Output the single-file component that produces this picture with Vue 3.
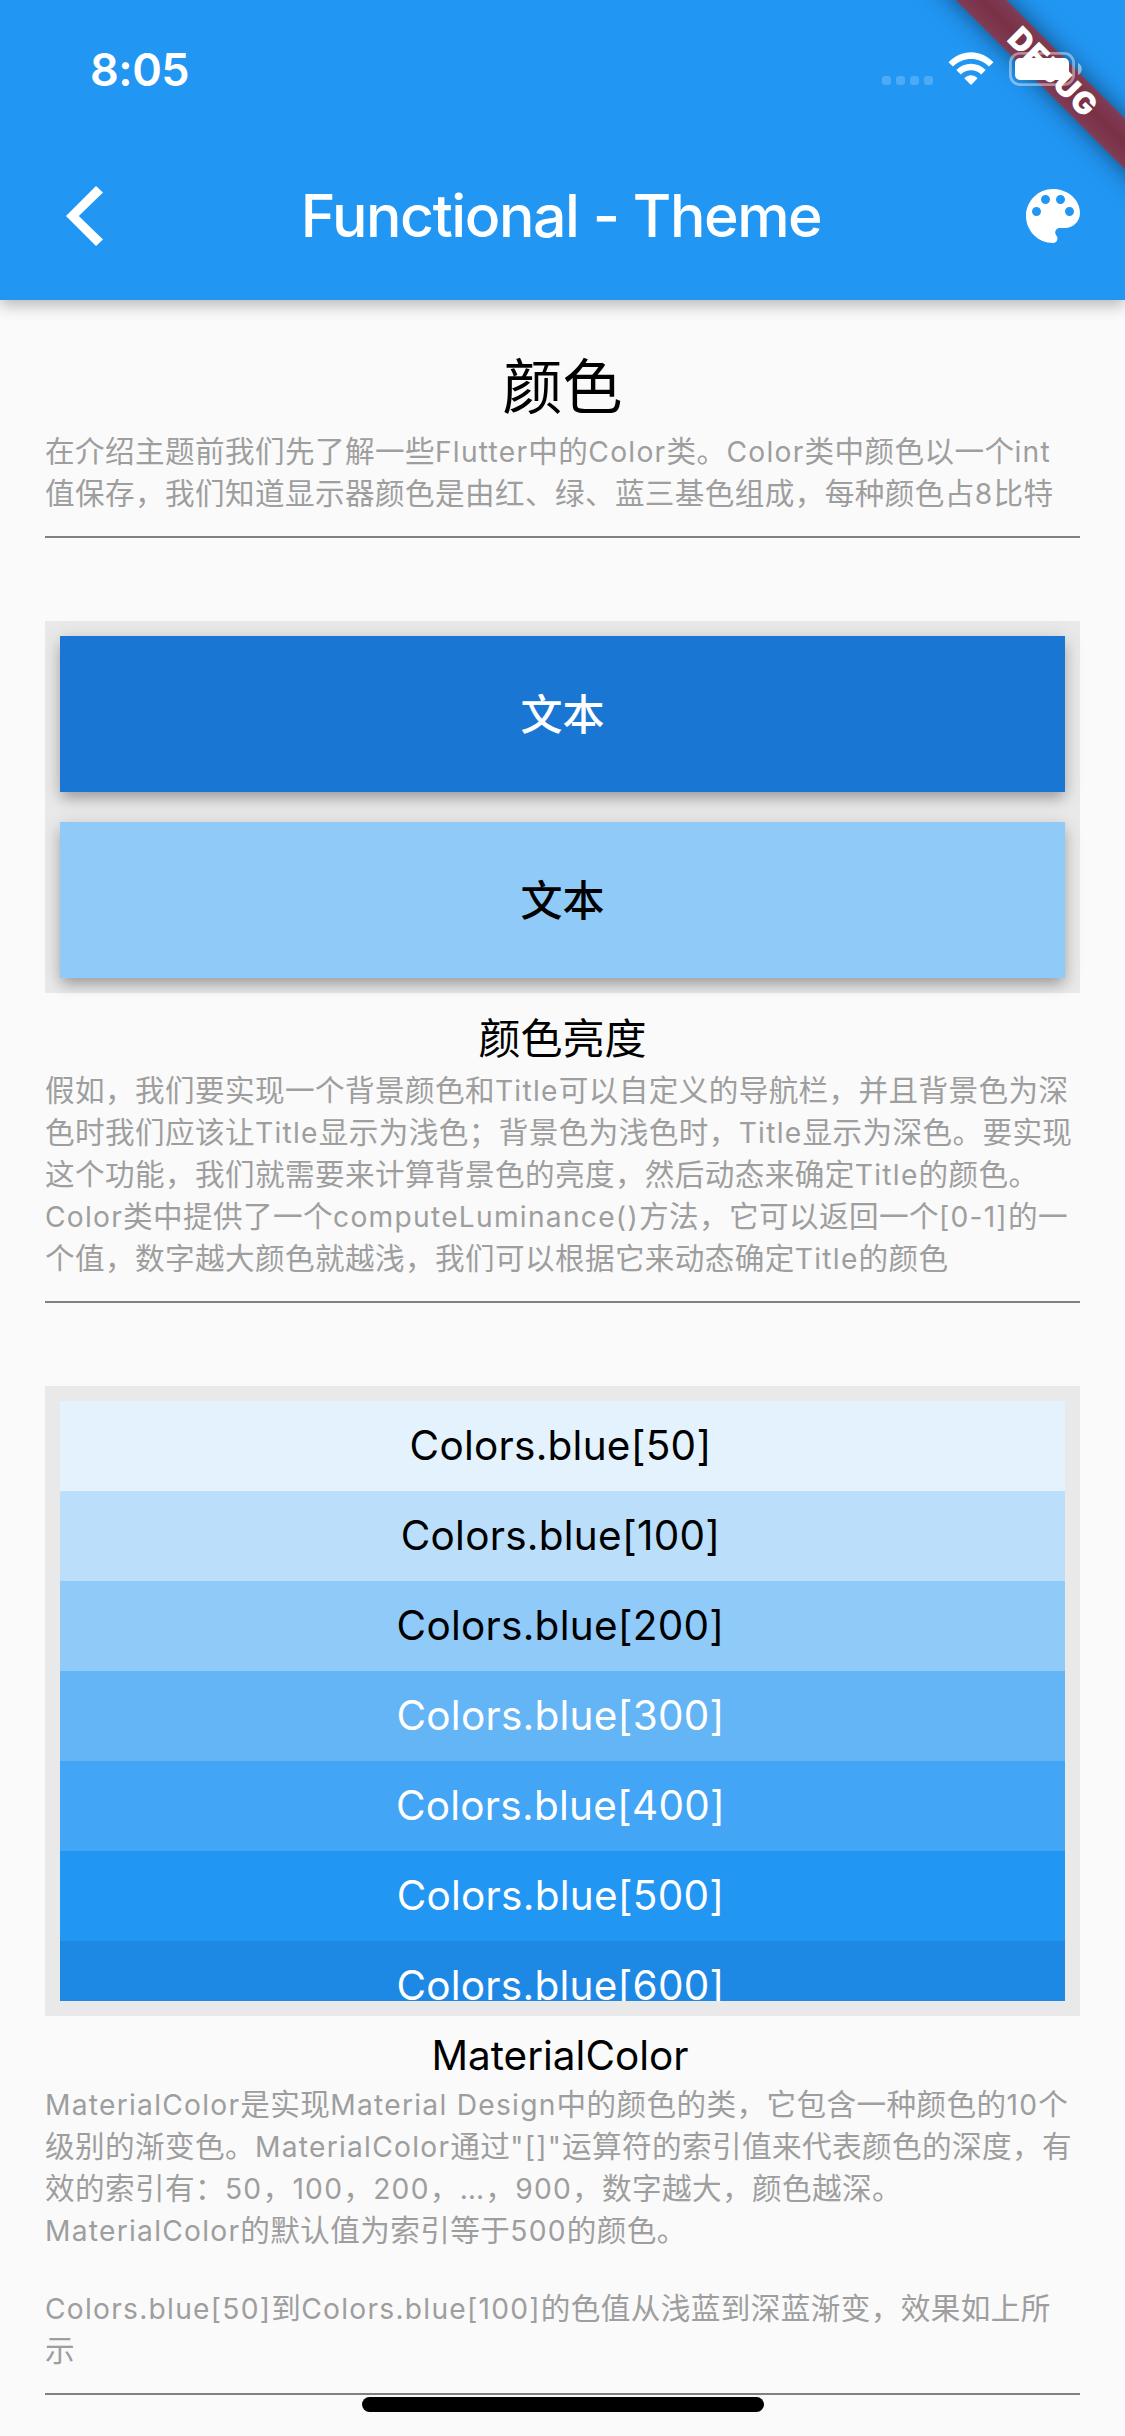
<script setup>
// Splits a line into CJK and Latin runs so each script gets its own size and tracking.
const runs = (line) =>
  line.split(/([\x20-\x7e…]+)/).filter(Boolean).map((text) => ({ text, latin: /^[\x20-\x7e…]/.test(text) }))

const intro = [
  '在介绍主题前我们先了解一些Flutter中的Color类。Color类中颜色以一个int',
  '值保存，我们知道显示器颜色是由红、绿、蓝三基色组成，每种颜色占8比特',
].map(runs)

const luminance = [
  '假如，我们要实现一个背景颜色和Title可以自定义的导航栏，并且背景色为深',
  '色时我们应该让Title显示为浅色；背景色为浅色时，Title显示为深色。要实现',
  '这个功能，我们就需要来计算背景色的亮度，然后动态来确定Title的颜色。',
  'Color类中提供了一个computeLuminance()方法，它可以返回一个[0-1]的一',
  '个值，数字越大颜色就越浅，我们可以根据它来动态确定Title的颜色',
].map(runs)

const material = [
  'MaterialColor是实现Material Design中的颜色的类，它包含一种颜色的10个',
  '级别的渐变色。MaterialColor通过"[]"运算符的索引值来代表颜色的深度，有',
  '效的索引有：50，100，200，…，900，数字越大，颜色越深。',
  'MaterialColor的默认值为索引等于500的颜色。',
].map(runs)

const gradient = [
  'Colors.blue[50]到Colors.blue[100]的色值从浅蓝到深蓝渐变，效果如上所',
  '示',
].map(runs)

const shades = [50, 100, 200, 300, 400, 500, 600]
</script>

<template>
  <div class="screen">
    <header class="app-bar">
      <div class="status">
        <span class="time">8:05</span>
        <div class="indicators">
          <div class="dots"><i v-for="n in 4" :key="n" class="dot"></i></div>
          <svg class="wifi" width="46" height="34" viewBox="0 0 46 34">
            <path d="M0.5 10.2C13 -3.2 33 -3.2 45.5 10.2L41 14.6C31 4.6 15 4.6 5 14.6Z" />
            <path d="M8.3 18C16.5 9.7 29.5 9.7 37.7 18L33.2 22.4C27.4 16.8 18.6 16.8 12.8 22.4Z" />
            <path d="M16.3 26.2C20.2 22.3 25.8 22.3 29.7 26.2L23 33Z" />
          </svg>
          <svg class="battery" width="74" height="34" viewBox="0 0 74 34">
            <rect x="1.4" y="1.4" width="63.2" height="31.2" rx="9.6" fill="none" stroke="#fff" stroke-opacity=".42" stroke-width="2.8" />
            <rect x="6" y="6" width="54" height="22" rx="5" fill="#fff" />
            <path d="M69 11C74 13 74 21 69 23Z" fill="#fff" fill-opacity=".5" />
          </svg>
        </div>
      </div>
      <div class="toolbar">
        <svg class="back" width="37" height="60" viewBox="0 0 37 60">
          <path d="M0 30L30 0L37 6.6L12.8 30L37 53.4L30 60Z" />
        </svg>
        <h1 class="title">Functional - Theme</h1>
        <svg class="palette" width="72" height="72" viewBox="0 0 24 24">
          <path d="M12 3c-4.97 0-9 4.03-9 9s4.03 9 9 9c.83 0 1.5-.67 1.5-1.5 0-.39-.15-.74-.39-1.01-.23-.26-.38-.61-.38-.99 0-.83.67-1.5 1.5-1.5H16c2.76 0 5-2.24 5-5 0-4.42-4.03-8-9-8zm-5.5 9c-.83 0-1.5-.67-1.5-1.5S5.67 9 6.5 9 8 9.67 8 10.5 7.33 12 6.5 12zm3-4C8.67 8 8 7.33 8 6.5S8.67 5 9.5 5s1.5.67 1.5 1.5S10.33 8 9.5 8zm5 0c-.83 0-1.5-.67-1.5-1.5S13.67 5 14.5 5s1.5.67 1.5 1.5S15.33 8 14.5 8zm3 4c-.83 0-1.5-.67-1.5-1.5S16.67 9 17.5 9s1.5.67 1.5 1.5-.67 1.5-1.5 1.5z" />
        </svg>
      </div>
      <div class="banner-clip"><div class="banner">DEBUG</div></div>
    </header>

    <main class="content">
      <section class="section">
        <h2 class="heading large">颜色</h2>
        <p class="text">
          <span v-for="(line, i) in intro" :key="i" class="line"><span v-for="(run, j) in line" :key="j" :class="{ latin: run.latin }">{{ run.text }}</span></span>
        </p>
      </section>

      <section class="section">
        <div class="panel cards">
          <div class="card dark">文本</div>
          <div class="card light">文本</div>
        </div>
        <h3 class="heading">颜色亮度</h3>
        <p class="text">
          <span v-for="(line, i) in luminance" :key="i" class="line"><span v-for="(run, j) in line" :key="j" :class="{ latin: run.latin }">{{ run.text }}</span></span>
        </p>
      </section>

      <section class="section">
        <div class="panel">
          <div class="swatches">
            <div v-for="shade in shades" :key="shade" class="swatch" :class="'blue-' + shade">Colors.blue[{{ shade }}]</div>
          </div>
        </div>
        <h3 class="heading latin-heading">MaterialColor</h3>
        <p class="text first">
          <span v-for="(line, i) in material" :key="i" class="line"><span v-for="(run, j) in line" :key="j" :class="{ latin: run.latin }">{{ run.text }}</span></span>
        </p>
        <p class="text last">
          <span v-for="(line, i) in gradient" :key="i" class="line"><span v-for="(run, j) in line" :key="j" :class="{ latin: run.latin }">{{ run.text }}</span></span>
        </p>
      </section>
    </main>
    <div class="home-indicator"></div>
  </div>
</template>

<style>
body {
  margin: 0;
  background: #fafafa;
}
</style>

<style scoped>
.screen {
  position: relative;
  width: 1125px;
  height: 2436px;
  overflow: hidden;
  background: #fafafa;
  color: #000;
  font-family: Inter, "Noto Sans CJK SC", sans-serif;
  text-spacing-trim: space-all;
}

.app-bar {
  position: relative;
  z-index: 1;
  height: 300px;
  background: #2196f3;
  color: #fff;
  box-shadow: 0 5px 15px rgba(0, 0, 0, 0.28);
}

.status {
  display: flex;
  justify-content: space-between;
  height: 132px;
  box-sizing: border-box;
  padding: 52px 42px 0 90px;
  position: relative;
  z-index: 2;
}

.time {
  height: 34px;
  font-size: 45px;
  font-weight: 600;
  line-height: 35px;
  letter-spacing: -0.5px;
}

.indicators {
  display: flex;
  height: 34px;
}

.dots {
  display: flex;
  gap: 5px;
  padding-top: 24px;
  margin-right: 15px;
}

.dot {
  width: 9px;
  height: 9px;
  border-radius: 3px;
  background: rgba(255, 255, 255, 0.2);
}

.wifi {
  margin-right: 15px;
  fill: #fff;
}

.toolbar {
  display: flex;
  align-items: center;
  height: 168px;
  box-sizing: border-box;
  padding: 0 36px 0 66px;
}

.back,
.palette {
  fill: #fff;
  flex: none;
}

.title {
  flex: 1;
  margin: 0 0 0 2px;
  font-size: 59px;
  font-weight: 500;
  line-height: 84px;
  letter-spacing: -1.45px;
  text-align: center;
  white-space: nowrap;
}

.banner-clip {
  position: absolute;
  z-index: 1;
  top: 0;
  right: 0;
  width: 220px;
  height: 220px;
  overflow: hidden;
}

.banner {
  position: absolute;
  top: 54px;
  left: -2px;
  width: 300px;
  height: 36px;
  transform: rotate(45deg);
  background: linear-gradient(#7f3d56, #7a3044 50%, #7f3d56);
  box-shadow: 0 0 24px rgba(0, 0, 0, 0.5);
  font-size: 31px;
  font-weight: 900;
  line-height: 36px;
  letter-spacing: 0.8px;
  text-align: center;
}

.content {
  padding: 44px 45px 0;
}

.section {
  margin-bottom: 83px;
  border-bottom: 2px solid #808080;
}

.section:last-child {
  margin-bottom: 0;
}

.panel {
  padding: 15px;
  background: #e9e9e9;
}

.cards {
  display: flex;
  flex-direction: column;
  gap: 30px;
}

.card {
  height: 156px;
  font-size: 42px;
  font-weight: 500;
  line-height: 158px;
  text-align: center;
  box-shadow: 0 8px 12px -2px rgba(0, 0, 0, 0.22), 0 4px 18px rgba(0, 0, 0, 0.17);
}

.dark {
  background: #1976d2;
  color: #fff;
}

.light {
  background: #90caf9;
}

.heading {
  margin: 0;
  height: 76px;
  font-size: 42px;
  font-weight: 400;
  line-height: 91px;
  text-align: center;
}

.heading.large {
  height: 86px;
  font-size: 60px;
  line-height: 86px;
}

.heading.latin-heading {
  height: 67px;
  padding-right: 5px;
  font-size: 40.5px;
  line-height: 79px;
}

.text {
  margin: 0 0 22px;
  color: #9e9e9e;
  font-size: 29.6px;
  letter-spacing: 0.4px;
}

.text.first {
  margin-bottom: 36px;
}

.line {
  display: block;
  height: 42px;
  line-height: 42px;
  white-space: nowrap;
}

.latin {
  font-size: 28.2px;
  letter-spacing: 1.25px;
}

.swatches {
  height: 600px;
  overflow: hidden;
}

.swatch {
  height: 90px;
  padding-right: 4px;
  font-size: 40.5px;
  line-height: 90px;
  letter-spacing: 0.25px;
  text-align: center;
}

.blue-50 { background: #e3f2fd; }
.blue-100 { background: #bbdefb; }
.blue-200 { background: #90caf9; }
.blue-300 { background: #64b5f6; color: #fff; }
.blue-400 { background: #42a5f5; color: #fff; }
.blue-500 { background: #2196f3; color: #fff; }
.blue-600 { background: #1e88e5; color: #fff; }

.home-indicator {
  position: absolute;
  left: 362px;
  bottom: 24px;
  width: 402px;
  height: 15px;
  border-radius: 8px;
  background: #000;
}
</style>
